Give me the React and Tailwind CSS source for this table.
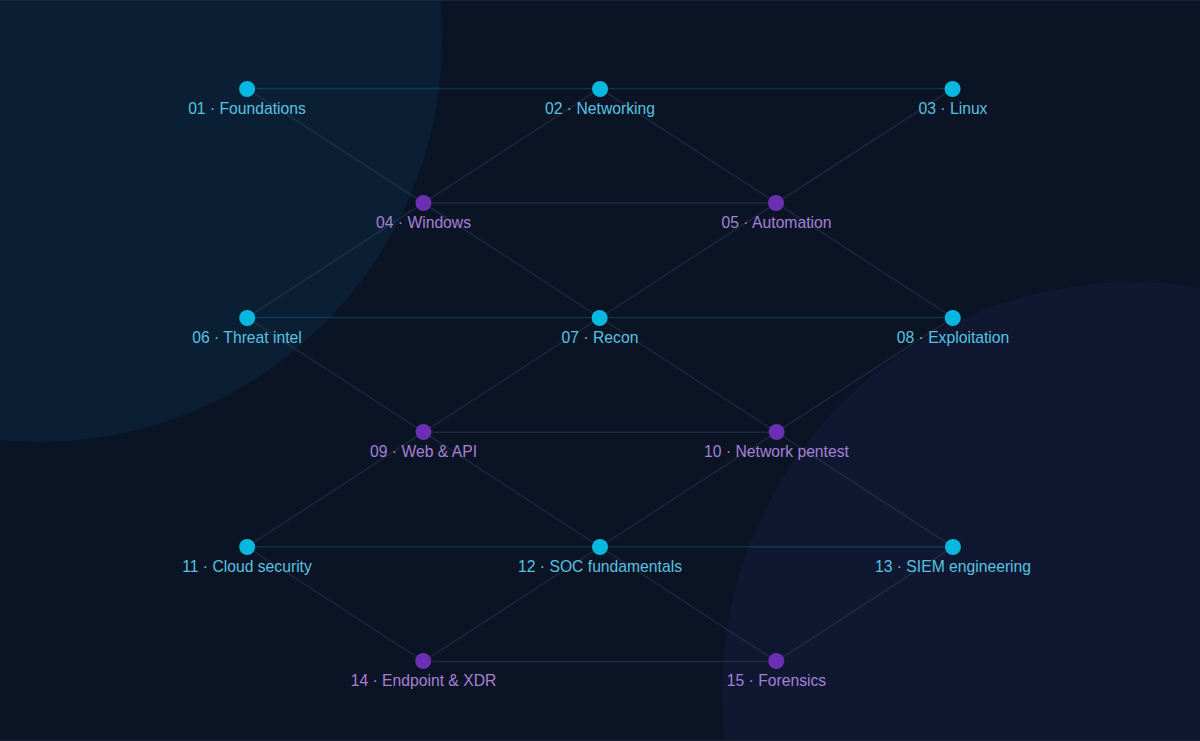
import React from 'react'

const COLS = [247, 423.5, 600, 776.5, 953]
const ROWS = [87.5, 202, 316.6, 431.2, 545.8, 660.4]

const nodes = [
    { id: 1, c: 0, r: 0, label: 'Foundations', kind: 'cyan' },
    { id: 2, c: 2, r: 0, label: 'Networking', kind: 'cyan' },
    { id: 3, c: 4, r: 0, label: 'Linux', kind: 'cyan' },
    { id: 4, c: 1, r: 1, label: 'Windows', kind: 'violet' },
    { id: 5, c: 3, r: 1, label: 'Automation', kind: 'violet' },
    { id: 6, c: 0, r: 2, label: 'Threat intel', kind: 'cyan' },
    { id: 7, c: 2, r: 2, label: 'Recon', kind: 'cyan' },
    { id: 8, c: 4, r: 2, label: 'Exploitation', kind: 'cyan' },
    { id: 9, c: 1, r: 3, label: 'Web & API', kind: 'violet' },
    { id: 10, c: 3, r: 3, label: 'Network pentest', kind: 'violet' },
    { id: 11, c: 0, r: 4, label: 'Cloud security', kind: 'cyan' },
    { id: 12, c: 2, r: 4, label: 'SOC fundamentals', kind: 'cyan' },
    { id: 13, c: 4, r: 4, label: 'SIEM engineering', kind: 'cyan' },
    { id: 14, c: 1, r: 5, label: 'Endpoint & XDR', kind: 'violet' },
    { id: 15, c: 3, r: 5, label: 'Forensics', kind: 'violet' },
]

const edges = [
    [1, 2], [2, 3], [1, 4], [2, 4], [2, 5], [3, 5], [4, 5],
    [4, 6], [4, 7], [5, 7], [5, 8], [6, 7], [7, 8],
    [6, 9], [7, 9], [7, 10], [8, 10], [9, 10],
    [9, 11], [9, 12], [10, 12], [10, 13], [11, 12], [12, 13],
    [11, 14], [12, 14], [12, 15], [13, 15], [14, 15],
]

const pos = (id) => {
    const n = nodes[id - 1]
    return { x: COLS[n.c], y: ROWS[n.r], kind: n.kind }
}

const Node = ({ node }) => {
    const cyan = node.kind === 'cyan'
    return (
        <div className="absolute flex flex-col items-center -translate-x-1/2"
            style={{ left: COLS[node.c], top: ROWS[node.r] - 8 }}>
            <div className={cyan ? 'w-4 h-4 rounded-full bg-[#06b8e0]' : 'w-4 h-4 rounded-full bg-[#6c2eb2]'} />
            <span className={cyan
                ? 'mt-[3px] whitespace-nowrap text-[15.7px] leading-[18px] text-[#58c2e0]'
                : 'mt-[3px] whitespace-nowrap text-[15.7px] leading-[18px] text-[#a580d8]'}>
                {String(node.id).padStart(2, '0')} · {node.label}
            </span>
        </div>
    )
}

const App = () => {
    return (
        <div className="relative w-full h-[741px] overflow-hidden bg-[#0b1424] border-y border-[#1a2436] font-['Liberation_Sans',Arial,sans-serif]">
            {/* soft background blobs */}
            <div className="absolute -left-[364px] -top-[365px] w-[806px] h-[806px] rounded-full bg-[#0a1f33]" />
            <div className="absolute left-[722px] top-[281px] w-[822px] h-[822px] rounded-full bg-[#0f1830]" />

            <svg className="absolute inset-0 w-full h-full" viewBox="0 0 1200 739" fill="none">
                {edges.map(([a, b]) => {
                    const p = pos(a)
                    const q = pos(b)
                    const flat = p.y === q.y
                    const stroke = flat && p.kind === 'cyan'
                        ? 'rgba(34, 160, 210, 0.22)'
                        : flat
                            ? 'rgba(120, 150, 190, 0.16)'
                            : 'rgba(130, 150, 185, 0.15)'
                    return (
                        <line key={`${a}-${b}`} x1={p.x} y1={p.y} x2={q.x} y2={q.y}
                            stroke={stroke} strokeWidth="1.5" />
                    )
                })}
            </svg>

            {nodes.map((n) => <Node key={n.id} node={n} />)}
        </div>
    )
}

export default App
